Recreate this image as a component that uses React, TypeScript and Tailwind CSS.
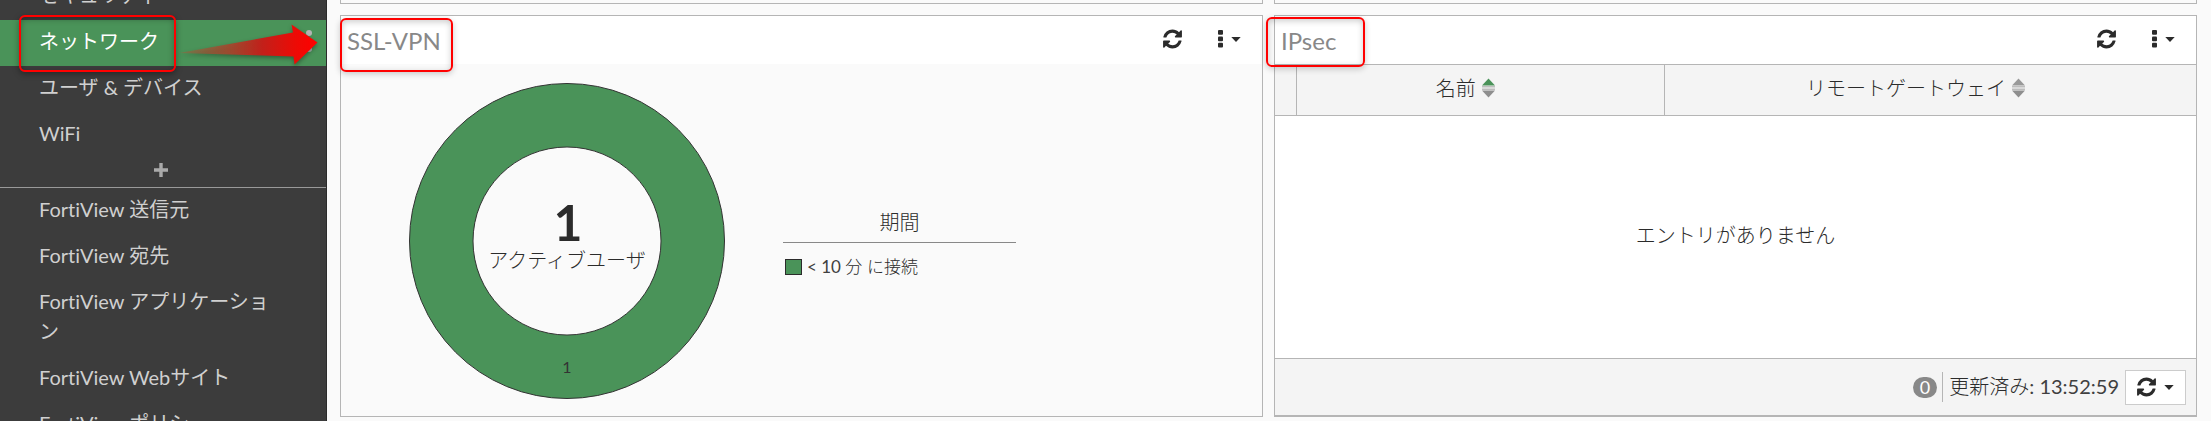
import type { ReactNode } from "react";

function RefreshIcon() {
  return (
    <svg viewBox="0 0 1536 1792" className="h-[22px] w-[19px]" fill="currentColor" aria-hidden="true">
      <path d="M1511 1056q0 5-1 7-64 268-268 434.5t-478 166.5q-146 0-282.5-55t-243.5-157l-129 129q-19 19-45 19t-45-19-19-45v-448q0-26 19-45t45-19h448q26 0 45 19t19 45-19 45l-137 137q71 66 161 102t187 36q134 0 250-65t186-179q11-17 53-117 8-23 30-23h192q13 0 22.5 9.5t9.5 22.5zm25-800v448q0 26-19 45t-45 19h-448q-26 0-45-19t-19-45 19-45l138-138q-148-137-349-137-134 0-250 65t-186 179q-11 17-53 117-8 23-30 23h-199q-13 0-22.5-9.5t-9.5-22.5v-7q65-268 270-434.5t480-166.5q146 0 284 55.5t245 156.5l130-129q19-19 45-19t45 19 19 45z" />
    </svg>
  );
}

function Caret() {
  return (
    <svg viewBox="0 0 10 5" className="h-[5px] w-[10px]" fill="currentColor" aria-hidden="true">
      <path d="M0.3 0h9.4L5 5z" />
    </svg>
  );
}

function DotsIcon() {
  return (
    <svg viewBox="0 0 5 18" className="h-[18px] w-[5px]" fill="currentColor" aria-hidden="true">
      <rect x="0" y="0" width="5" height="4.8" rx="1" />
      <rect x="0" y="6.4" width="5" height="4.8" rx="1" />
      <rect x="0" y="12.8" width="5" height="4.8" rx="1" />
    </svg>
  );
}

function SortIcon({ ascending = false }: { ascending?: boolean }) {
  return (
    <svg viewBox="0 0 13 20" className="h-5 w-[13px]" aria-hidden="true">
      <path d="M0 7.5 6.500 0.500l6.500 7z" fill={ascending ? "#4a9259" : "#999"} />
      <path d="M0 8h13v1.500h-13zM0 10.500h13V12h-13z" fill="#bdbdbd" />
      <path d="M0 12.500h13L6.500 19.500z" fill="#8e8e8e" />
    </svg>
  );
}

function NavItem({ label, active = false }: { label: string; active?: boolean }) {
  return (
    <li>
      <a
        href="#"
        className={
          active
            ? "flex items-center justify-between bg-[#4a9359] pt-[6px] pr-[14px] pb-[10px] pl-[39px] leading-[30px] text-white"
            : "block pt-[6px] pr-[50px] pb-[10px] pl-[39px] leading-[30px] text-[#d0d0d0]"
        }
      >
        {label}
        {active && (
          <svg viewBox="0 0 6 22" className="h-[22px] w-[6px]" fill="#b4b4b4" aria-hidden="true">
            <circle cx="3" cy="3" r="3" />
            <circle cx="3" cy="11" r="3" />
            <circle cx="3" cy="19" r="3" />
          </svg>
        )}
      </a>
    </li>
  );
}

function Panel({ title, children }: { title: string; children: ReactNode }) {
  return (
    <section className="flex min-w-0 flex-1 flex-col border border-[#b5b5b5]">
      <header className="flex h-12 shrink-0 items-center bg-white pr-[21px] pl-[6px]">
        <h2 className="flex-1 pt-[2px] text-2xl text-[#888]">{title}</h2>
        <button type="button" aria-label="更新" className="mr-9 pb-[2px]">
          <RefreshIcon />
        </button>
        <button type="button" aria-label="メニュー" className="flex items-center gap-2 pb-[2px]">
          <DotsIcon />
          <Caret />
        </button>
      </header>
      {children}
    </section>
  );
}

function ActiveUsersChart() {
  return (
    <svg viewBox="0 0 318 318" className="h-[318px] w-[318px] shrink-0" role="img" aria-label="アクティブユーザ 1">
      <circle cx="159" cy="159" r="125.75" fill="none" stroke="#4a9359" strokeWidth="63.5" />
      <circle cx="159" cy="159" r="157.5" fill="none" stroke="#333" />
      <circle cx="159" cy="159" r="94" fill="none" stroke="#333" />
      <text x="160" y="159" textAnchor="middle" className="fill-[#2b2b2b] text-[50px] font-bold">1</text>
      <text x="159" y="186" textAnchor="middle" className="fill-[#2b2b2b] text-xl font-light">アクティブユーザ</text>
      <text x="159" y="291" textAnchor="middle" className="fill-[#333] text-base">1</text>
    </svg>
  );
}

export default function App() {
  return (
    <div className="relative flex h-screen overflow-hidden bg-[#fafafa] font-['Lato','Noto_Sans_CJK_JP',sans-serif] text-xl text-[#2b2b2b] [font-variant-ligatures:none]">
      <nav className="w-[327px] shrink-0 border-r border-[#2b2b2b] bg-[#3c3c3c]">
        <ul className="-mt-[26px]">
          <NavItem label="セキュリティ" />
          <NavItem label="ネットワーク" active />
          <NavItem label="ユーザ & デバイス" />
          <NavItem label="WiFi" />
        </ul>
        <button type="button" aria-label="追加" className="flex h-[30px] w-full items-center justify-center border-b border-[#999] pr-1 pb-[6px] text-[#aaa]">
          <svg viewBox="0 0 14 14" className="h-[14px] w-[14px]" fill="currentColor" aria-hidden="true">
            <path d="M5.3 0h3.4v5.3H14v3.4H8.7V14H5.3V8.7H0V5.3h5.3z" />
          </svg>
        </button>
        <ul>
          <NavItem label="FortiView 送信元" />
          <NavItem label="FortiView 宛先" />
          <NavItem label="FortiView アプリケーション" />
          <NavItem label="FortiView Webサイト" />
          <NavItem label="FortiView ポリシー" />
        </ul>
      </nav>

      <main className="flex min-w-0 flex-1 flex-col gap-[11px] pr-[14px] pb-1 pl-[13px]">
        <div className="flex h-1 shrink-0 gap-[11px]">
          <div className="flex-1 border border-t-0 border-[#b5b5b5]" />
          <div className="flex-1 border border-t-0 border-[#b5b5b5]" />
        </div>
        <div className="flex min-h-0 flex-1 gap-[11px]">
          <Panel title="SSL-VPN">
            <div className="flex flex-1 items-center gap-[57px] pt-[2px] pl-[67px]">
              <ActiveUsersChart />
              <div className="w-[233px]">
                <h3 className="border-b border-[#888] pb-[2px] text-center leading-9 font-light">期間</h3>
                <p className="mt-3 flex items-center gap-[5px] pl-[2px] text-[17px] leading-6">
                  <span className="h-4 w-[17px] border border-[#2b2b2b] bg-[#4a9359]" />
                  <span className="text-[#404040]">
                    &lt; 10 <span className="font-light text-[#2b2b2b]">分 に接続</span>
                  </span>
                </p>
              </div>
            </div>
          </Panel>

          <Panel title="IPsec">
            <table className="w-full table-fixed border-y border-[#b5b5b5] bg-[#f4f4f4]">
              <thead>
                <tr className="h-[51px]">
                  <th className="w-[21px] border-r border-[#b5b5b5]" aria-label="状態" />
                  <th className="w-[40%] border-r border-[#b5b5b5] pr-[30px] pb-1 font-light">
                    <span className="flex items-center justify-center gap-[6px]">
                      名前
                      <SortIcon ascending />
                    </span>
                  </th>
                  <th className="pr-[30px] pb-1 font-light">
                    <span className="flex items-center justify-center gap-[6px]">
                      リモートゲートウェイ
                      <SortIcon />
                    </span>
                  </th>
                </tr>
              </thead>
            </table>
            <p className="flex flex-1 items-center justify-center bg-white pb-1 font-light">エントリがありません</p>
            <footer className="flex h-[58px] shrink-0 items-center justify-end border-t border-b border-[#b5b5b5] bg-[#f4f4f4] pr-[10px]">
              <span className="mr-[5px] rounded-full bg-[#888] px-[7px] text-lg leading-[21px] text-white">0</span>
              <span className="mr-[6px] border-l border-[#b5b5b5] pb-[2px] pl-[6px] leading-7 text-[#404040]">
                <span className="font-light text-[#2b2b2b]">更新済み</span>: 13:52:59
              </span>
              <button type="button" aria-label="今すぐ更新" className="flex h-[35px] w-[61px] items-center justify-center gap-2 border border-[#ccc] bg-white">
                <RefreshIcon />
                <Caret />
              </button>
            </footer>
          </Panel>
        </div>
      </main>

      <div className="pointer-events-none absolute top-[15px] left-[19px] h-[57px] w-[157px] rounded-md border-2 border-[#f00] shadow-[0_2px_6px_rgba(0,0,0,0.35),inset_0_2px_6px_rgba(0,0,0,0.3)]" />
      <div className="pointer-events-none absolute top-[18px] left-[340px] h-[54px] w-[113px] rounded-md border-2 border-[#f00] shadow-[0_2px_6px_rgba(0,0,0,0.2),inset_0_2px_6px_rgba(0,0,0,0.2)]" />
      <div className="pointer-events-none absolute top-[17px] left-[1266px] h-[50px] w-[99px] rounded-md border-2 border-[#f00] shadow-[0_2px_6px_rgba(0,0,0,0.2),inset_0_2px_6px_rgba(0,0,0,0.2)]" />
      <svg viewBox="0 0 150 60" className="pointer-events-none absolute top-3 left-[175px] h-[60px] w-[150px] drop-shadow-[0_2px_2px_rgba(0,0,0,0.35)]" aria-hidden="true">
        <defs>
          <linearGradient id="arrow-fade" x1="0" x2="1" y1="0" y2="0">
            <stop offset="0" stopColor="#a85b3a" stopOpacity="0.4" />
            <stop offset="0.35" stopColor="#a5482e" stopOpacity="0.9" />
            <stop offset="0.6" stopColor="#c2201a" />
            <stop offset="0.85" stopColor="#ee0a05" />
            <stop offset="1" stopColor="#f00" />
          </linearGradient>
        </defs>
        <path d="M4 41 118 20.5 116.500 12.500 142.500 30.500 119.500 52.500 118.500 44.500z" fill="url(#arrow-fade)" />
      </svg>
    </div>
  );
}
